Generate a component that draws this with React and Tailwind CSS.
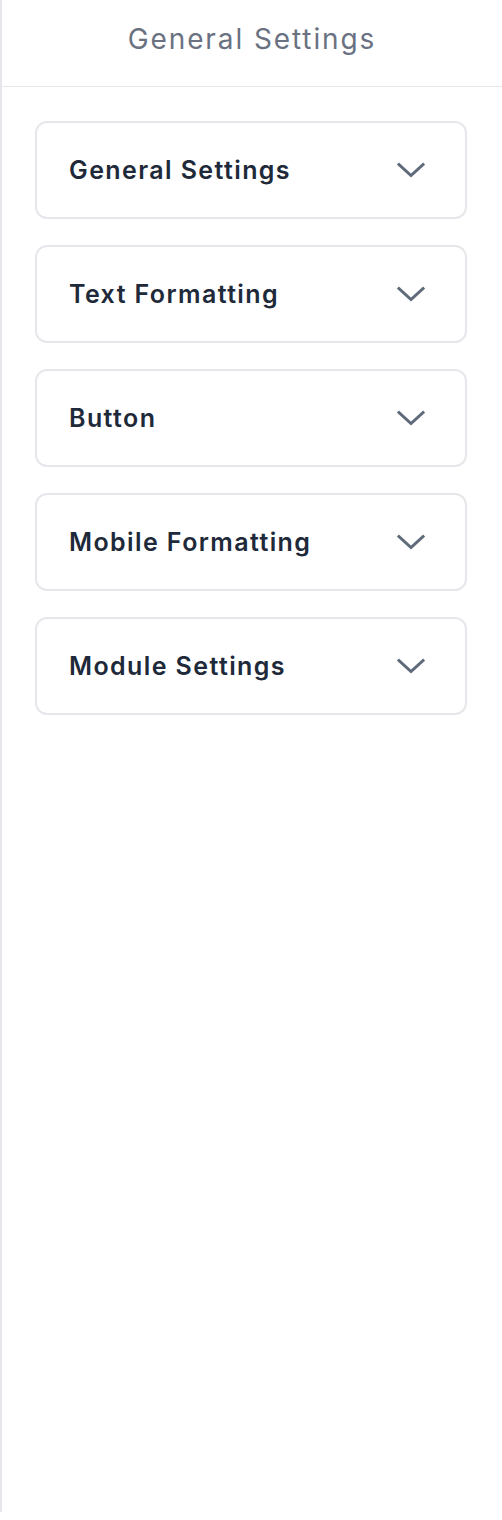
const sections = [
  "General Settings",
  "Text Formatting",
  "Button",
  "Mobile Formatting",
  "Module Settings",
];

const Chevron = () => (
  <svg width="28" height="16" viewBox="0 0 28 16" fill="none" className="text-[#5f6b7a]">
    <path d="M2 2.5 L14 13.5 L26 2.5" stroke="currentColor" strokeWidth="3" strokeLinecap="square" strokeLinejoin="miter" />
  </svg>
);

const App = () => {
  return (
    <div
      className="h-[1512px] w-[502px] border-l-2 border-gray-200 bg-white"
      style={{ fontFamily: 'Inter, "Noto Sans", sans-serif' }}
    >
      {/* Header */}
      <div className="h-[87px] border-b border-gray-200 flex justify-center pt-[21px]">
        <h1 className="text-[28px] leading-[36px] text-gray-500 tracking-[1.9px]">General Settings</h1>
      </div>

      {/* Sections */}
      <div className="pt-[34px] pl-[33px] pr-[35px] flex flex-col gap-[26px]">
        {sections.map((title) => (
          <div
            key={title}
            className="h-[98px] border-2 border-gray-200 rounded-xl flex items-center justify-between pl-[32px] pr-[40px]"
          >
            <span className="text-[25px] font-semibold text-gray-800 tracking-[1.4px] pt-[2px]">{title}</span>
            <Chevron />
          </div>
        ))}
      </div>
    </div>
  );
};

export default App;
